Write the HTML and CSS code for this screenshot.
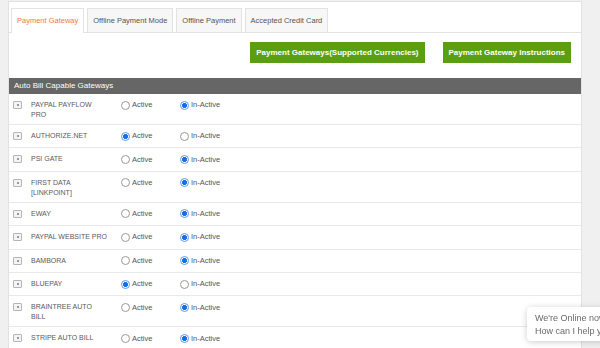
FILE: index.html
```html
<!DOCTYPE html>
<html lang="en">
<head>
    <meta charset="UTF-8">
    <meta name="viewport" content="width=device-width, initial-scale=1.0">
    <title>Payment Gateway</title>
    <link rel="stylesheet" href="styles.css">
</head>
<body>

    <div class="panel">
        <div class="tabs">
            <div class="tab active">Payment Gateway</div>
            <div class="tab">Offline Payment Mode</div>
            <div class="tab">Offline Payment</div>
            <div class="tab">Accepted Credit Card</div>
        </div>

        <div class="actions">
            <button class="btn">Payment Gateways(Supported Currencies)</button>
            <button class="btn">Payment Gateway Instructions</button>
        </div>

        <div class="section-head">Auto Bill Capable Gateways</div>

        <table class="gateways">
            <tr>
                <td class="col-icon"><span class="expand"></span></td>
                <td class="col-name">PAYPAL PAYFLOW<br>PRO</td>
                <td class="col-active"><label class="opt"><input type="radio" name="g1">Active</label></td>
                <td><label class="opt"><input type="radio" name="g1" checked>In-Active</label></td>
            </tr>
            <tr>
                <td class="col-icon"><span class="expand"></span></td>
                <td class="col-name">AUTHORIZE.NET</td>
                <td class="col-active"><label class="opt"><input type="radio" name="g2" checked>Active</label></td>
                <td><label class="opt"><input type="radio" name="g2">In-Active</label></td>
            </tr>
            <tr>
                <td class="col-icon"><span class="expand"></span></td>
                <td class="col-name">PSI GATE</td>
                <td class="col-active"><label class="opt"><input type="radio" name="g3">Active</label></td>
                <td><label class="opt"><input type="radio" name="g3" checked>In-Active</label></td>
            </tr>
            <tr>
                <td class="col-icon"><span class="expand"></span></td>
                <td class="col-name">FIRST DATA<br>[LINKPOINT]</td>
                <td class="col-active"><label class="opt"><input type="radio" name="g4">Active</label></td>
                <td><label class="opt"><input type="radio" name="g4" checked>In-Active</label></td>
            </tr>
            <tr>
                <td class="col-icon"><span class="expand"></span></td>
                <td class="col-name">EWAY</td>
                <td class="col-active"><label class="opt"><input type="radio" name="g5">Active</label></td>
                <td><label class="opt"><input type="radio" name="g5" checked>In-Active</label></td>
            </tr>
            <tr>
                <td class="col-icon"><span class="expand"></span></td>
                <td class="col-name">PAYPAL WEBSITE PRO</td>
                <td class="col-active"><label class="opt"><input type="radio" name="g6">Active</label></td>
                <td><label class="opt"><input type="radio" name="g6" checked>In-Active</label></td>
            </tr>
            <tr>
                <td class="col-icon"><span class="expand"></span></td>
                <td class="col-name">BAMBORA</td>
                <td class="col-active"><label class="opt"><input type="radio" name="g7">Active</label></td>
                <td><label class="opt"><input type="radio" name="g7" checked>In-Active</label></td>
            </tr>
            <tr>
                <td class="col-icon"><span class="expand"></span></td>
                <td class="col-name">BLUEPAY</td>
                <td class="col-active"><label class="opt"><input type="radio" name="g8" checked>Active</label></td>
                <td><label class="opt"><input type="radio" name="g8">In-Active</label></td>
            </tr>
            <tr>
                <td class="col-icon"><span class="expand"></span></td>
                <td class="col-name">BRAINTREE AUTO<br>BILL</td>
                <td class="col-active"><label class="opt"><input type="radio" name="g9">Active</label></td>
                <td><label class="opt"><input type="radio" name="g9" checked>In-Active</label></td>
            </tr>
            <tr>
                <td class="col-icon"><span class="expand"></span></td>
                <td class="col-name">STRIPE AUTO BILL</td>
                <td class="col-active"><label class="opt"><input type="radio" name="g10">Active</label></td>
                <td><label class="opt"><input type="radio" name="g10" checked>In-Active</label></td>
            </tr>
        </table>
    </div>

    <div class="chat">
        <div>We're Online now!</div>
        <div>How can I help you today?</div>
    </div>

</body>
</html>
```

FILE: styles.css
```css
        html, body {
            overflow: hidden;
        }

        body {
            font-family: 'Liberation Sans', Arial, sans-serif;
            margin: 0;
            background-color: #f0f0f0;
            color: #555;
        }

        .panel {
            margin: 1px 18px 0 8px;
            min-height: 400px;
            background-color: #fff;
            border: 1px solid #e2e2e2;
        }

        .tabs {
            display: flex;
            gap: 3px;
            padding: 6px 0 0 2px;
            border-bottom: 1px solid #e3e3e3;
        }

        .tab {
            height: 23px;
            line-height: 23px;
            padding: 0 5px;
            margin-bottom: -1px;
            font-size: 7.5px;
            color: #555;
            background-color: #f7f7f7;
            border: 1px solid #e3e3e3;
            border-bottom: none;
        }

        .tab.active {
            color: #f07a4a;
            background-color: #fff;
            height: 24px;
        }

        .actions {
            display: flex;
            justify-content: flex-end;
            gap: 18px;
            padding: 9px 10px 0;
            margin-bottom: 15px;
        }

        .btn {
            height: 21px;
            padding: 0 6px;
            font-family: inherit;
            font-size: 8px;
            font-weight: bold;
            color: #fdfff8;
            background-color: #5a9f10;
            border: none;
            border-radius: 0;
            cursor: pointer;
        }

        .section-head {
            height: 16px;
            line-height: 16px;
            padding-left: 5px;
            font-size: 8px;
            color: #fff;
            background-color: #666;
        }

        .gateways {
            width: 100%;
            border-collapse: collapse;
        }

        .gateways td {
            padding: 5px 0;
            vertical-align: top;
            font-size: 7px;
            line-height: 10px;
            border-bottom: 1px solid #e8e8e8;
        }

        .gateways td.col-name {
            width: 90px;
            padding: 6px 0 4px;
            color: #5a5a5a;
        }

        .col-icon {
            width: 22px;
        }

        .col-active {
            width: 59px;
        }

        .expand {
            display: block;
            width: 7px;
            height: 6px;
            margin: 2px 0 0 4px;
            background-color: #f4f4f4;
            border: 1px solid #b5b5b5;
            border-radius: 1px;
            position: relative;
        }

        .expand::after {
            content: '';
            position: absolute;
            left: 2.5px;
            top: 2px;
            width: 2px;
            height: 2px;
            background-color: #999;
        }

        .opt {
            display: flex;
            align-items: center;
            gap: 2px;
            height: 12.4px;
            font-size: 7.5px;
            color: #555;
        }

        .opt input {
            appearance: none;
            -webkit-appearance: none;
            width: 9px;
            height: 9px;
            margin: 0;
            border: 1px solid #999;
            border-radius: 50%;
            background-color: #fff;
        }

        .opt input:checked {
            border-color: #5a9bef;
            background: radial-gradient(circle, #1a6fe0 0 2.2px, #fff 2.8px);
        }

        .chat {
            position: fixed;
            left: 527px;
            top: 307px;
            width: 120px;
            height: 34px;
            padding: 5px 8px 0;
            box-sizing: border-box;
            font-size: 9px;
            line-height: 13px;
            color: #6a6a6a;
            white-space: nowrap;
            background-color: #fff;
            border-radius: 4px;
            box-shadow: 0 1px 6px rgba(0, 0, 0, 0.2);
        }
```
